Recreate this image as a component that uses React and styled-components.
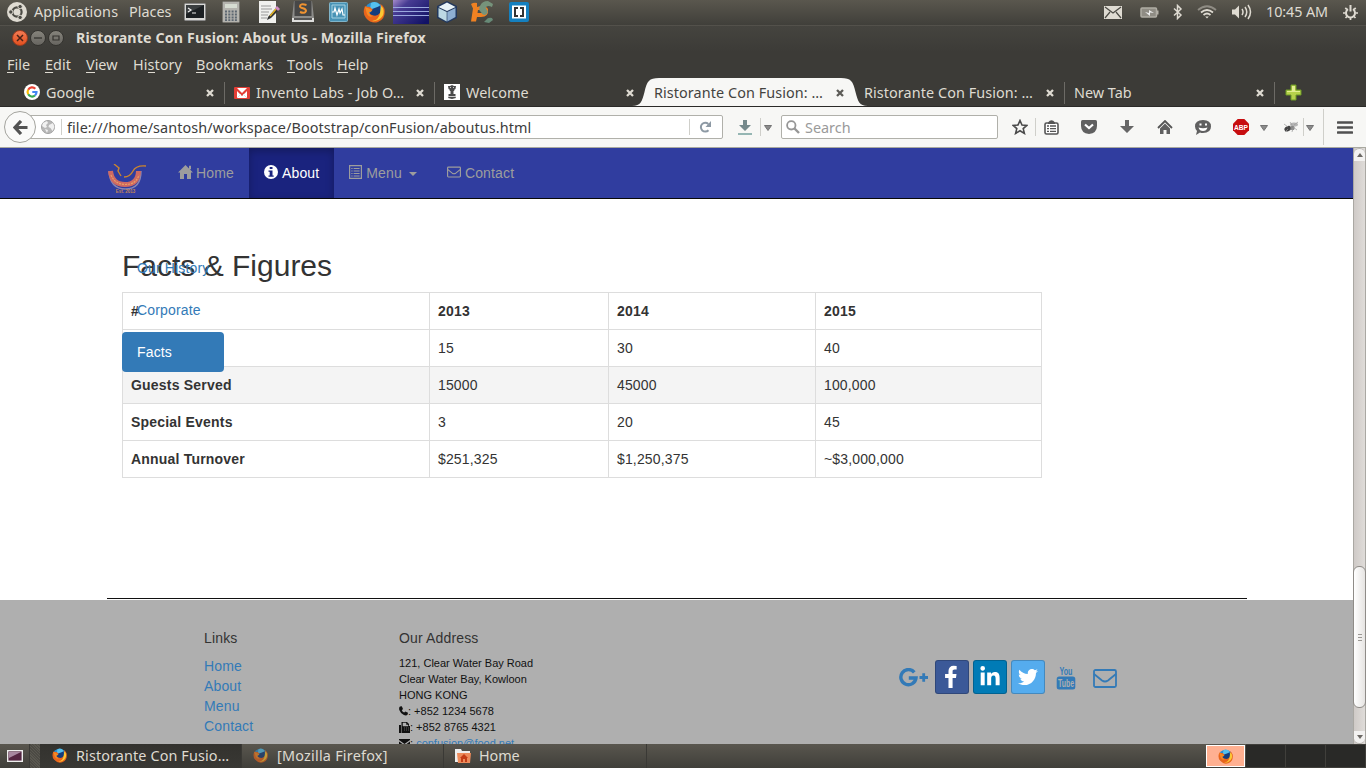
import React from 'react';
import styled, { createGlobalStyle, css } from 'styled-components';
import { FaLinkedinIn, FaTwitter } from 'react-icons/fa';

const ui = '"Noto Sans", "Open Sans", sans-serif';
const web = '"Liberation Sans", Arial, sans-serif';

const GlobalStyle = createGlobalStyle`
  * { box-sizing: border-box; }
  body { margin: 0; overflow: hidden; }
  svg { display: block; flex: none; }
`;

const Screen = styled.div`
  width: 1366px;
  height: 768px;
  display: flex;
  flex-direction: column;
  background: #3c3b37;
  font-family: ${ui};
  overflow: hidden;
`;
const Cell = styled.div`
  flex: none;
  width: ${p => p.$w}px;
  margin-left: ${p => p.$ml || 0}px;
  padding-top: ${p => p.$pt || 0}px;
  display: flex;
  align-items: center;
  white-space: pre;
`;
const Label = styled.span`
  flex: none;
  width: ${p => (p.$w ? p.$w + 'px' : 'auto')};
  margin-left: ${p => p.$ml || 0}px;
  letter-spacing: ${p => p.$ls ?? 0.08}px;
  font-size: ${p => p.$size || 14.4}px;
  white-space: pre;
`;
const Spacer = styled.div`flex: 1;`;
const Panel = styled.header`
  height: 25px;
  flex: none;
  display: flex;
  align-items: center;
  color: #dfdbd2;
  background: linear-gradient(#5a574e, #403f3a);
  line-height: 24px;
  padding-bottom: 1px;
`;
const TitleBar = styled.div`
  height: 27px;
  flex: none;
  display: flex;
  align-items: center;
  padding-bottom: 3px;
  border-top: 1px solid #53514b;
  background: linear-gradient(#45443f, #3c3b37);
  color: #dfdbd2;
  font-weight: 700;
`;
const WindowButton = styled.i`
  width: 16px;
  height: 16px;
  margin-right: 2px;
  border-radius: 50%;
  border: 1px solid ${p => (p.$close ? '#9f3d20' : '#34332f')};
  background: ${p => (p.$close ? 'linear-gradient(#f37b54,#e2501f)' : 'linear-gradient(#85837b,#676560)')};
  display: grid;
  place-items: center;
`;
const MenuBar = styled.nav`
  height: 26px;
  flex: none;
  display: flex;
  align-items: center;
  padding-bottom: 2px;
  color: #dfdbd2;
  u { text-decoration: none; box-shadow: 0 1px 0 #dfdbd2; display: inline-block; height: 15px; line-height: 15px; }
`;
const TabStrip = styled.div`
  height: 29px;
  flex: none;
  display: flex;
  align-items: center;
  padding: 1px 0 1px 15px;
  color: #dfdbd2;
  border-bottom: 1px solid #2b2a28;
`;
const TabBox = styled.div`
  position: relative;
  flex: none;
  width: 210px;
  height: 28px;
  padding-left: 9px;
  display: flex;
  align-items: center;
  color: ${p => (p.$active ? '#44433f' : '#dfdbd2')};
  ${p => p.$line && css`
    background: linear-gradient(#6d6b66, #6d6b66) right 0 top 4px / 1px 22px no-repeat;
  `}
`;
const TabShape = styled.svg`
  position: absolute;
  left: -13px;
  top: 0;
  z-index: 0;
`;
const TabBody = styled.div`
  position: relative;
  flex: 1;
  display: flex;
  align-items: center;
  gap: 6px;
`;
const Toolbar = styled.div`
  height: 41px;
  flex: none;
  display: flex;
  align-items: center;
  background: #f7f7f5;
  border-bottom: 1px solid #a9a9a0;
  color: #3c3c3c;
`;
const BackButton = styled.div`
  position: relative;
  flex: none;
  z-index: 1;
  width: 32px;
  height: 32px;
  margin-left: 4px;
  border: 1px solid #a4a49e;
  border-radius: 50%;
  background: #fafaf9;
  display: grid;
  place-items: center;
`;
const Field = styled.div`
  flex: none;
  width: ${p => p.$w}px;
  height: 24px;
  margin-left: ${p => p.$ml}px;
  border: 1px solid #b0b0aa;
  border-radius: 2px;
  background: #fff;
  display: flex;
  align-items: center;
  color: ${p => p.$color || '#3c3c3c'};
`;
const Rule = styled.i`
  flex: none;
  width: 1px;
  height: ${p => p.$h || 18}px;
  margin-left: ${p => p.$ml || 0}px;
  background: #cfcfca;
`;
const Viewport = styled.div`
  height: 596px;
  flex: none;
  display: flex;
  overflow: hidden;
`;
const Page = styled.div`
  width: 1353px;
  height: 596px;
  overflow: hidden;
  background: #fff;
  font: 14px/20px ${web};
  letter-spacing: 0.15px;
  color: #333;
`;
const NavBar = styled.div`
  height: 51px;
  background: #303d9f;
  border-bottom: 1px solid #080808;
`;
const Container = styled.div`
  width: 1140px;
  margin: 0 106px 0 107px;
`;
const NavRow = styled(Container)`
  display: flex;
`;
const Brand = styled.div`width: 56px; padding-top: 16px;`;
const NavLink = styled.a`
  height: 50px;
  padding: 15px;
  display: flex;
  gap: ${p => p.$gap || 3}px;
  color: ${p => (p.$active ? '#fff' : '#9d9d9d')};
  ${p => p.$active && css`
    background: #1a237e;
    box-shadow: inset 0 3px 9px rgba(0,0,0,.25);
  `}
  svg { margin-top: 2px; }
`;
const Caret = styled.i`
  margin: 9px 0 0 3px;
  width: 0;
  height: 0;
  border: 4px solid transparent;
  border-top-color: currentColor;
  border-bottom: 0;
`;
const Main = styled(Container)`
  position: relative;
  height: 400px;
  padding: 50px 15px 0;
  border-bottom: 1px solid #111;
`;
const Heading = styled.h2`
  margin: 0 0 10px;
  font-size: 30px;
  line-height: 33px;
  font-weight: 400;
  letter-spacing: 0;
`;
const Table = styled.table`
  width: 919px;
  table-layout: fixed;
  border-collapse: collapse;
  th, td {
    height: 37px;
    padding: 8px;
    line-height: 20px;
    border: 1px solid #ddd;
    text-align: left;
  }
  th { letter-spacing: 0.2px; }
`;
const Row = styled.tr`background: ${p => (p.$shade ? '#f4f4f4' : '#fff')};`;
const Pills = styled.div`
  position: absolute;
  left: 15px;
  top: 49px;
  width: 102px;
  display: flex;
  flex-direction: column;
  gap: 2px;
`;
const Pill = styled.a`
  padding: 10px 15px;
  border-radius: 4px;
  white-space: nowrap;
  color: ${p => (p.$active ? '#fff' : '#337ab7')};
  background: ${p => (p.$active ? '#337ab7' : 'transparent')};
`;
const Footer = styled.footer`
  margin-top: 1px;
  height: 145px;
  background: #afafaf;
  display: flex;
  padding: 28px 0 0 204px;
`;
const FootColumn = styled.div`
  width: ${p => p.$w}px;
  display: flex;
  flex-direction: column;
`;
const FootTitle = styled.h5`
  margin: 0 0 8px;
  font-size: 14px;
  font-weight: 400;
  line-height: 20px;
`;
const FootLink = styled.a`color: #337ab7;`;
const AddressLine = styled.div`
  display: flex;
  align-items: center;
  font-size: 11px;
  line-height: 16px;
  height: 16px;
  color: #111;
  white-space: pre;
`;
const Address = styled.div`margin-top: -1px; letter-spacing: 0;`;
const Social = styled.div`
  height: 34px;
  margin-top: 32px;
  display: flex;
  align-items: center;
  color: #337ab7;
`;
const SocialButton = styled.a`
  width: 34px;
  height: 34px;
  margin-right: 4px;
  border-radius: 3px;
  border: 1px solid rgba(0,0,0,.2);
  color: #fff;
  background: ${p => p.$bg};
  display: grid;
  place-items: center;
`;
const ScrollTrack = styled.div`
  width: 13px;
  border: 1px solid #aaa8a3;
  border-width: 0 1px;
  background: linear-gradient(90deg, #cfcac7, #dfdcd9);
  display: flex;
  flex-direction: column;
  justify-content: space-between;
`;
const ScrollEnd = styled.div`
  height: 13px;
  background: #f3f2f1;
  border: 1px solid #b8b5b1;
  border-width: ${p => (p.$down ? '0 0 1px' : '1px 0 0')};
  border-radius: ${p => (p.$down ? '0 0 6px 6px' : '6px 6px 0 0')};
  display: grid;
  place-items: center;
`;
const Thumb = styled.div`
  height: 142px;
  margin: 405px -1px 0;
  border: 1px solid #8f8c88;
  border-radius: 6px;
  background: linear-gradient(90deg, #fff, #e6e4e2);
  display: flex;
  flex-direction: column;
  align-items: center;
  justify-content: center;
  gap: 2px;
  i { width: 4px; height: 1px; background: #9b9894; }
`;
const TaskBar = styled.footer`
  height: 24px;
  flex: none;
  display: flex;
  align-items: center;
  background: linear-gradient(#59564e, #403f3a);
  color: #dfdbd2;
`;
const Task = styled.div`
  width: ${p => p.$w}px;
  height: 24px;
  padding: 0 0 1px ${p => p.$pl}px;
  display: flex;
  align-items: center;
  gap: ${p => p.$gap || 9}px;
  border-right: 1px solid #3a3935;
  background: ${p => (p.$active ? 'linear-gradient(#33322e,#393834)' : 'none')};
  line-height: 20px;
  svg { opacity: ${p => (p.$dim ? 0.65 : 1)}; }
`;
const Grip = styled.div`
  width: 11px;
  height: 24px;
  margin-left: 6px;
  background: repeating-linear-gradient(45deg, #4c4a44 0 1px, #5a5850 1px 2px);
  border-left: 1px solid #3b3a36;
`;
const Workspace = styled.div`
  width: 40px;
  height: 24px;
  border: 1px solid #403f3b;
  border-width: 1px 1px 1px 0;
  background: #292927;
  display: grid;
  place-items: center;
  ${p => p.$current && css`
    background: #ffb091;
    border: 1px solid #fff;
    height: 22px;
    margin-right: 1px;
    width: 39px;
  `}
`;

const Firefox = ({ s = 22 }) => (
  <svg width={s} height={s} viewBox="0 0 22 22">
    <circle cx="11" cy="10.500" r="9.500" fill="#2c8fd0" />
    <path d="M8 2q5-3 9 2l-5 5-5-1z" fill="#55c1ee" />
    <path d="M9 8l8-3 1 7-6 5-6-3z" fill="#153d7c" />
    <path d="M2 5Q-1 12 3 17q5 6 12 4 8-3 6.500-13Q20 4 17 3q3 5 0 9-3 4-8 2-3-1-3-4l4-1-3-3q-3 0-5-1z" fill="#e9651b" />
    <path d="M20 7q2 6-2 10-4 4-9 3 7-1 8-8l1-7z" fill="#fbc834" />
    <path d="M2 6l3 1 4 2q0 2-3 2 0 3 4 4-4 2-6-2z" fill="#f58a24" />
  </svg>
);
const Globe = () => (
  <svg width="14" height="14" viewBox="0 0 14 14">
    <circle cx="7" cy="7" r="6.500" fill="#b8b8b8" stroke="#a1a1a1" />
    <path d="M2 3l4-2 1 2-2 2 1 2-2 1-3-2zM8 5l4-2 1.500 4-2 4-2-3-2-1zM4 9l3 1-1 3z" fill="#f1f1f1" />
  </svg>
);
const CloseMark = ({ c = '#dfdbd2' }) => (
  <svg width="8" height="8" viewBox="0 0 8 8"><path d="M1 1l6 6M7 1L1 7" stroke={c} strokeWidth="2.300" /></svg>
);
const Triangle = () => (
  <svg width="8" height="6" viewBox="0 0 8 6"><path d="M.5.5h7L4 5.500z" fill="#8b8b8b" stroke="#737373" /></svg>
);
const Envelope = ({ w, h, sw = 1 }) => (
  <svg width={w} height={h} viewBox="0 0 24 19" fill="none" stroke="currentColor" strokeWidth={sw}>
    <rect x="1" y="1" width="22" height="17" rx="1.500" />
    <path d="M1 5q5 4 8 6.500 3 2 6 0Q18 9 23 5" />
  </svg>
);
const GoogleFavicon = () => (
  <svg width="16" height="16" viewBox="0 0 16 16" fill="none" strokeWidth="2.200">
    <circle cx="8" cy="8" r="8" fill="#fff" />
    <path d="M11.300 4.700A4.500 4.500 0 0 0 4.200 5.700" stroke="#ea4335" />
    <path d="M4.200 5.700a4.500 4.500 0 0 0 0 4.600" stroke="#fbbc05" />
    <path d="M4.200 10.300a4.500 4.500 0 0 0 6.800 1.200" stroke="#34a853" />
    <path d="M11 11.500Q12.500 10 12.500 8H8.300" stroke="#4285f4" />
  </svg>
);
const GmailFavicon = () => (
  <svg width="16" height="14" viewBox="0 0 16 14">
    <rect y="2" width="16" height="12" rx="1" fill="#e33d35" />
    <path d="M3 3h10L8 8zM3 6l5 5 5-5v7H3z" fill="#fff" />
    <path d="M3 13l4-4M13 13L9 9" stroke="#ddd" />
  </svg>
);
const EmblemFavicon = () => (
  <svg width="16" height="16" viewBox="0 0 16 16">
    <path fill="#fff" d="M0 0h16v16H0z" />
    <path d="M4 2l2 0 2-1 2 1h2l-.5 3-1.500 1 .5 1H9.500v3H11l1 1-1 1 1 2-4 1-4-1 1-2-1-1 1-1h1.500V7H5.500L6 6 4.500 5z" fill="#4a4a4a" />
    <path d="M6 3.500h1m2 0h1M5 12.500h6" stroke="#ccc" />
  </svg>
);

const launchers = [
  { x: 13, w: 22, icon: (
    <svg width="22" height="18" viewBox="0 0 22 18"><rect x=".5" y=".5" width="21" height="17" rx="1" fill="#d8d8d5" stroke="#888" /><path fill="#1c2023" d="M2 2h18v13H2z" /><path d="M2 2h18L2 11z" fill="#3a3e40" /><path d="M4 5l3 2-3 2M8 10h4" stroke="#eee" fill="none" strokeWidth="1.200" /></svg>) },
  { x: 16, w: 18, icon: (
    <svg width="18" height="22" viewBox="0 0 18 22"><rect x=".5" y=".5" width="17" height="21" rx="1" fill="#b4b3ae" stroke="#77756f" /><path fill="#d6dcd2" d="M3 3h12v4H3z" /><path d="M3 10.500h12M3 13.500h12M3 16.500h12M3 19.200h12" stroke="#5c6670" strokeWidth="1.800" strokeDasharray="2 1.300" /></svg>) },
  { x: 18, w: 22, icon: (
    <svg width="22" height="22" viewBox="0 0 22 22"><path d="M1 0h17v22H1z" fill="#f0f0ee" /><path d="M3 5h10M3 8h11M3 11h8M3 14h7M3 17h6" stroke="#999" /><path d="M10 16l8-9 3 2-8 8-4 2z" fill="#333" /><path d="M12 15l6-7" stroke="#e2b323" strokeWidth="1.500" /><path d="M17 7l2-2 3 3-2 2z" fill="#d18ac3" /></svg>) },
  { x: 12, w: 22, icon: (
    <svg width="22" height="22" viewBox="0 0 22 22"><path d="M2 0h18l2 17v4H0v-4z" fill="#8c8c8a" /><path d="M0 17h22v4H0z" fill="#dededc" /><path d="M2.500 0h17v15h-17z" fill="#474747" /><path d="M2 17h18v2H2z" fill="#555" /><path d="M14.500 4Q8 2 8 5.500q0 1 3 1.800t3 2.700q-1 3-6 1" fill="none" stroke="#f09331" strokeWidth="2" /></svg>) },
  { x: 15, w: 19, icon: (
    <svg width="19" height="20" viewBox="0 0 19 20"><rect x=".5" y=".5" width="18" height="19" rx="1" fill="#4893b6" stroke="#80b4c9" /><path d="M3 3h13v13H3z" fill="none" stroke="#a5d2e2" /><path d="M3 10h2l1-4 2 7 2-6 1 4 2-4 1 6h2" fill="none" stroke="#fff" strokeWidth="1.200" /></svg>) },
  { x: 15, w: 22, icon: <Firefox /> },
  { x: 8, w: 36, icon: (
    <svg width="36" height="24" viewBox="0 0 36 24"><defs><linearGradient id="ecl" x2="1" y2=".8"><stop stopColor="#a58bc9" /><stop offset=".3" stopColor="#473c93" /><stop offset="1" stopColor="#121266" /></linearGradient></defs><path fill="url(#ecl)" d="M0 0h36v24H0z" /><path d="M0 7.500h36M0 11.500h36M0 15.500h36" stroke="#9aa8de" strokeWidth="1.200" /></svg>) },
  { x: 7, w: 22, icon: (
    <svg width="22" height="24" viewBox="0 0 22 24"><path d="M11 1l10 5v12l-10 5-10-5V6z" fill="#23385c" /><path d="M11 2.500L19.500 7 11 11 2.500 7z" fill="#e8f3f7" /><path d="M2.500 8L10.700 12v9.500l-8.200-4.500z" fill="#bcd8e4" /><path d="M19.500 8L11.300 12v9.500l8.200-4.500z" fill="#8eafd2" /></svg>) },
  { x: 13, w: 23, icon: (
    <svg width="23" height="24" viewBox="0 0 23 24"><path d="M0 4q3-2 6-1v4q8-3 11 2 1 8-7 8H6l-1 4.500H0l2-13z" fill="#f08122" /><path d="M7 10h4q2 0 1 3H6.500z" fill="#4b4a45" /><path d="M9 6q2-5 8-5l5 3-1 3q-4-2-6 0-1 1 1 3 2 3-2 5-3 0-4-3-3-2-1-6z" fill="#76937b" /><path d="M15 20q2-3 6-2l1 2-4 3-5-1z" fill="#678a77" /></svg>) },
  { x: 15, w: 20, icon: (
    <svg width="20" height="20" viewBox="0 0 20 20"><rect width="20" height="20" rx="2" fill="#1580bf" /><rect x="3" y="3.500" width="14" height="13" fill="#fff" /><path d="M9 6H6v8h3M11 6h3v8h-3" fill="none" stroke="#333" strokeWidth="2" /></svg>) },
];

const tabs = [
  { text: 'Google', icon: <GoogleFavicon />, line: true, ls: 0 },
  { text: 'Invento Labs - Job O…', icon: <GmailFavicon />, line: true },
  { text: 'Welcome', icon: <EmblemFavicon /> },
  { text: 'Ristorante Con Fusion: …', active: true },
  { text: 'Ristorante Con Fusion: …', line: true },
  { text: 'New Tab', line: true, ls: 0 },
];

const rows = [
  ['', '15', '30', '40'],
  ['Guests Served', '15000', '45000', '100,000'],
  ['Special Events', '3', '20', '45'],
  ['Annual Turnover', '$251,325', '$1,250,375', '~$3,000,000'],
];

const SystemPanel = () => (
  <Panel>
    <Cell $w={20} $ml={7}>
      <svg width="20" height="20" viewBox="0 0 20 20"><circle cx="10" cy="10" r="10" fill="#dfdbd2" /><circle cx="10" cy="10" r="4.600" fill="none" stroke="#4b4a44" strokeWidth="2.200" /><g fill="#4b4a44" stroke="#dfdbd2"><circle cx="3.800" cy="10" r="2.200" /><circle cx="13.100" cy="4.600" r="2.200" /><circle cx="13.100" cy="15.400" r="2.200" /></g></svg>
    </Cell>
    <Label $w={84} $ml={7} $ls={0.12}>Applications</Label>
    <Label $w={42} $ml={11} $ls={0}>Places</Label>
    {launchers.map((l, i) => <Cell key={i} $w={l.w} $ml={l.x}>{l.icon}</Cell>)}
    <Spacer />
    <Cell $w={18}><svg width="18" height="13" viewBox="0 0 18 13"><path fill="#dfdbd2" d="M0 0h18v13H0z" /><path d="M1 1l8 6 8-6M1 12l5-6M17 12l-5-6" stroke="#4b4a44" fill="none" strokeWidth="1.200" /></svg></Cell>
    <Cell $w={19} $ml={18}><svg width="19" height="11" viewBox="0 0 19 11"><rect x="1" y="1" width="15.500" height="9" rx="1" fill="#8f8c84" stroke="#b0ada4" strokeWidth="1.500" /><path d="M17 3.500h1.500v4H17" fill="#b5b1a8" /><path d="M5 5l4 1V3l5 3-4-.5V9z" fill="#eee" /></svg></Cell>
    <Cell $w={10} $ml={14}><svg width="10" height="16" viewBox="0 0 10 16"><path d="M1 4.500l7 6.500-3.500 3.500v-13L8 5l-7 6.500" fill="none" stroke="#dfdbd2" strokeWidth="1.500" /></svg></Cell>
    <Cell $w={20} $ml={14}><svg width="20" height="14" viewBox="0 0 20 14" fill="none" stroke="#dfdbd2" strokeWidth="1.700"><path d="M1 5q9-7.500 18 0" stroke="#8f8c84" /><path d="M4 7.500q6-5 12 0M6.500 10q3.500-3 7 0" /><path d="M8.200 11.500h3.600L10 13.500z" fill="#dfdbd2" stroke="none" /></svg></Cell>
    <Cell $w={20} $ml={15}><svg width="20" height="16" viewBox="0 0 20 16" fill="none" stroke="#dfdbd2" strokeWidth="1.500"><path d="M0 5.500h3l4-4v13l-4-4H0z" fill="#dfdbd2" stroke="none" /><path d="M10 5q2 3 0 6M13 3q3.500 5 0 10M16 1q5 7 0 14" /></svg></Cell>
    <Label $w={62} $ml={14} $ls={-0.1}>10:45 AM</Label>
    <Cell $w={15} $ml={15}><svg width="15" height="15" viewBox="0 0 15 15" fill="none" stroke="#dfdbd2"><path d="M5 4.200a4.500 4.500 0 1 0 5 0" strokeWidth="2" /><path d="M7.500 0v6.500" strokeWidth="2" /><path d="M2.300 2.800l1.500 1.500M12.700 2.800l-1.500 1.500M0 8h2.500M12.500 8H15M2.500 13l2-2M12.500 13l-2-2M7.500 12.500V15" strokeWidth="1.700" /></svg></Cell>
    <Cell $w={8} />
  </Panel>
);

const BrowserToolbar = () => (
  <Toolbar>
    <BackButton><svg width="15" height="15" viewBox="0 0 15 15"><path d="M8 1L2 7.500 8 14M3 7.500h11.500" stroke="#535353" fill="none" strokeWidth="3.200" /></svg></BackButton>
    <Field $w={694} $ml={-7}>
      <Cell $w={14} $ml={11}><Globe /></Cell>
      <Rule $ml={6} $h={16} />
      <Label $w={622} $ml={5} $ls={0.09}>file:///home/santosh/workspace/Bootstrap/conFusion/aboutus.html</Label>
      <Rule $h={16} />
      <Cell $w={12} $ml={9}><svg width="13" height="12" viewBox="0 0 13 12"><path d="M9.500 9.200A4.400 4.400 0 1 1 9.300 3" fill="none" stroke="#8d99a4" strokeWidth="2" /><path d="M12 0v6H6.500z" fill="#8d99a4" /></svg></Cell>
    </Field>
    <Cell $w={14} $ml={15}><svg width="14" height="15" viewBox="0 0 14 15"><path d="M5 0h4v5h4L7 11 1 5h4z" fill="#75898b" /><path d="M0 14h14" stroke="#75a09d" strokeWidth="1.500" /></svg></Cell>
    <Rule $ml={8} />
    <Cell $w={8} $ml={3} $pt={2}><Triangle /></Cell>
    <Field $w={217} $ml={9} $color="#9a9a9a">
      <Cell $w={14} $ml={4}><svg width="14" height="14" viewBox="0 0 14 14" fill="none" stroke="#969696" strokeWidth="1.800"><circle cx="5.300" cy="5.300" r="4.200" /><path d="M8.500 8.500l4.500 4.500" strokeWidth="2.400" /></svg></Cell>
      <Label $ml={5} $ls={0}>Search</Label>
    </Field>
    <Cell $w={16} $ml={14}><svg width="16" height="16" viewBox="0 0 16 16"><path d="M8 1.500l2 4.500 4.800.4-3.600 3.200 1.200 4.800L8 11.800l-4.400 2.600 1.200-4.800L1.200 6.400 6 6z" fill="none" stroke="#4a4a4a" strokeWidth="1.600" /></svg></Cell>
    <Rule $ml={7} />
    <Cell $w={15} $ml={8}><svg width="15" height="15" viewBox="0 0 15 15"><rect x="1" y="3" width="13" height="11" rx="1.500" fill="#fff" stroke="#555" strokeWidth="1.600" /><path d="M4 2.500q3.500-4.500 7 0V4H4z" fill="#555" /><path d="M3 6h2m1 0h6M3 8.700h2m1 0h6M3 11.400h2m1 0h6" stroke="#555" strokeWidth="1.300" /></svg></Cell>
    <Cell $w={16} $ml={22}><svg width="16" height="14" viewBox="0 0 16 14"><path d="M0 1.500Q0 0 1.500 0h13Q16 0 16 1.500V6q0 7-8 8-8-1-8-8z" fill="#606060" /><path d="M4 4.500L8 8l4-3.500" fill="none" stroke="#fff" strokeWidth="2.200" /></svg></Cell>
    <Cell $w={14} $ml={23}><svg width="14" height="14" viewBox="0 0 14 14"><path d="M5 0h4v6h5l-7 7-7-7h5z" fill="#666" /></svg></Cell>
    <Cell $w={16} $ml={23}><svg width="16" height="15" viewBox="0 0 16 15"><path d="M1 8l7-7 7 7" fill="none" stroke="#555" strokeWidth="1.800" /><path d="M3 8.500l5-5 5 5V14H9.500v-4h-3v4H3z" fill="#606060" /></svg></Cell>
    <Cell $w={16} $ml={22}><svg width="16" height="15" viewBox="0 0 16 15"><path d="M8 0q8 0 8 6.500T8 13q-2 0-3-.5L1 15l1-4Q0 9 0 6.500 0 0 8 0z" fill="#606060" /><path d="M3.500 7.500q4.500 1.500 9 0-1 3.500-4.500 3.500T3.500 7.500M4.500 3.500h2v2h-2zM10 3.500h2v2h-2z" fill="#fff" /></svg></Cell>
    <Cell $w={16} $ml={22}><svg width="16" height="16" viewBox="0 0 16 16"><path d="M4.700 0h6.600L16 4.700v6.600L11.300 16H4.700L0 11.300V4.700z" fill="#c70d0f" /><text x="8" y="11" textAnchor="middle" fontFamily="Liberation Sans" fontWeight="700" fontSize="8" textLength="14" lengthAdjust="spacingAndGlyphs" fill="#fff">ABP</text></svg></Cell>
    <Cell $w={8} $ml={11} $pt={2}><Triangle /></Cell>
    <Cell $w={16} $ml={15}><svg width="16" height="14" viewBox="0 0 16 14"><ellipse cx="4.500" cy="8.500" rx="3.500" ry="2.500" fill="#444" transform="rotate(-25 5 8)" /><ellipse cx="11" cy="4.500" rx="4" ry="2" fill="#b5b5b5" /><circle cx="9.500" cy="8" r="2.200" fill="#888" /><path d="M1 4l4 3M2 12l3-3M9 12l1-4M14 10l-4-3M7 2l2 3M15 2l-4 3" stroke="#999" strokeWidth=".7" /></svg></Cell>
    <Rule $ml={4} />
    <Cell $w={8} $ml={2} $pt={2}><Triangle /></Cell>
    <Rule $ml={9} $h={36} />
    <Cell $w={16} $ml={13}><svg width="16" height="13" viewBox="0 0 16 13"><path d="M1 1.500h14M1 6.500h14M1 11.500h14" stroke="#505050" strokeWidth="2.600" strokeLinecap="round" /></svg></Cell>
  </Toolbar>
);

const SiteNav = () => (
  <NavBar>
    <NavRow>
      <Brand>
        <svg width="42" height="30" viewBox="0 0 42 30" fill="none">
          <path d="M2 7q1 18 16.500 18T34 7" stroke="#8585b5" strokeWidth="1.500" />
          <path d="M3.500 7Q5 20.500 18 20.500T31.500 7" stroke="#cf6a62" strokeWidth="5" />
          <path d="M4 11q4 9.500 14.500 9.500T32 11" stroke="#e8a064" strokeWidth="1.200" strokeDasharray="2 1" />
          <path d="M7 0l5 4-1 3 3 5M17 13q6 0 9-6 3-6 13-5" stroke="#c98430" strokeWidth="1.400" />
          <text x="18.500" y="29" fontSize="4.500" fontWeight="700" fontFamily="Liberation Sans" textAnchor="middle" fill="#c58756" letterSpacing="0">Est. 2013</text>
        </svg>
      </Brand>
      <NavLink>
        <svg width="15" height="14" viewBox="0 0 15 14"><path d="M7.500 0L15 7.500h-2V14H9V9H6v5H2V7.500H0zM11 .8h2v3.500h-2z" fill="currentColor" /></svg>Home
      </NavLink>
      <NavLink $active $gap={4}>
        <svg width="14" height="14" viewBox="0 0 14 14"><circle cx="7" cy="7" r="7" fill="#fff" /><path d="M5.700 2h2.800v2H5.700zM4.500 5.500h4v5h1.200v1.200H4.500v-1.200h1.200V6.700H4.500z" fill="#1a237e" /></svg>About
      </NavLink>
      <NavLink $gap={4}>
        <svg width="13" height="14" viewBox="0 0 13 14" fill="none" stroke="currentColor"><path d="M.6.6h11.800v12.800H.6z" strokeWidth="1.200" /><path d="M2.300 3.500h1.300m1 0h6M2.300 6h1.300m1 0h6M2.300 8.500h1.300m1 0h6M2.300 11h1.300m1 0h6" strokeWidth="1.200" /></svg>Menu<Caret />
      </NavLink>
      <NavLink $gap={4}><Envelope w={14} h={14} sw={2} />Contact</NavLink>
    </NavRow>
  </NavBar>
);

const SiteFooter = () => (
  <Footer>
    <FootColumn $w={195}>
      <FootTitle>Links</FootTitle>
      {['Home', 'About', 'Menu', 'Contact'].map(t => <FootLink key={t}>{t}</FootLink>)}
    </FootColumn>
    <FootColumn $w={500}>
      <FootTitle>Our Address</FootTitle>
      <Address>
        <AddressLine>121, Clear Water Bay Road</AddressLine>
        <AddressLine>Clear Water Bay, Kowloon</AddressLine>
        <AddressLine>HONG KONG</AddressLine>
        <AddressLine><svg width="9" height="10" viewBox="0 0 9 10"><path d="M1 .5L2.800.2 4 3 2.800 4.200Q3.500 6 5.200 6.600L6.300 5.500 9 6.800 8.500 8.800Q7 10 4.500 8.800 1.500 7.200.3 4 -.3 1.500 1 .5z" fill="#111" /></svg>: +852 1234 5678</AddressLine>
        <AddressLine><svg width="11" height="11" viewBox="0 0 11 11"><path d="M0 3h2v8H0zM2.500 0H8l2 2v2h1v7H2.500z" fill="#111" /><path d="M4 1h3v2h2v1H4zM5 6h1m1 0h1m1 0h1M5 8h1m1 0h1m1 0h1" stroke="#afafaf" fill="#afafaf" strokeWidth=".5" /></svg>: +852 8765 4321</AddressLine>
        <AddressLine><svg width="11" height="9" viewBox="0 0 11 9"><path d="M0 0h11v1L5.500 5 0 1zM0 2.500l5.500 4 5.500-4V9H0z" fill="#111" /></svg>: <FootLink>confusion@food.net</FootLink></AddressLine>
      </Address>
    </FootColumn>
    <Social>
      <Cell $w={36} $pt={2}><svg width="30" height="20" viewBox="0 0 30 20" fill="none" stroke="#337ab7"><path d="M15.300 4.300A7.600 7.600 0 1 0 17 10H9.800" strokeWidth="3.400" /><path d="M20.500 9.500h8.500M24.700 5.300v8.500" strokeWidth="2.800" /></svg></Cell>
      <SocialButton $bg="#3b5998"><svg width="24" height="24" viewBox="100 -60 1792 1792"><path d="M1343 12v264h-157q-86 0-116 36t-30 108v189h293l-39 296h-254v759h-306v-759h-255v-296h255v-218q0-186 104-288.500t277-102.500q147 0 228 12z" fill="#fff" /></svg></SocialButton>
      <SocialButton $bg="#007bb6"><FaLinkedinIn size={22} /></SocialButton>
      <SocialButton $bg="#55acee"><FaTwitter size={20} /></SocialButton>
      <Cell $w={20} $ml={7} $pt={1}><svg width="20" height="24" viewBox="0 0 20 24" overflow="visible"><text x="10" y="9" textAnchor="middle" fontFamily="Liberation Sans" fontSize="11.500" fontWeight="700" textLength="13" lengthAdjust="spacingAndGlyphs" fill="#337ab7" letterSpacing="0">You</text><rect x=".7" y="10.500" width="18.600" height="13" rx="2.500" fill="#337ab7" /><text x="10" y="21.200" textAnchor="middle" fontFamily="Liberation Sans" fontSize="11" fontWeight="700" textLength="16" lengthAdjust="spacingAndGlyphs" fill="#afafaf" letterSpacing="0">Tube</text></svg></Cell>
      <Cell $w={24} $ml={17} $pt={2}><Envelope w={24} h={19} sw={1.8} /></Cell>
    </Social>
  </Footer>
);

export default function App() {
  return (
    <Screen>
      <GlobalStyle />
      <SystemPanel />
      <TitleBar>
        <Cell $w={64} $ml={12}>
          <WindowButton $close><svg width="8" height="8" viewBox="0 0 8 8"><path d="M1 1l6 6M7 1L1 7" stroke="#482217" strokeWidth="1.500" /></svg></WindowButton>
          <WindowButton><svg width="8" height="8" viewBox="0 0 8 8"><path d="M0 4h8" stroke="#34332f" strokeWidth="1.300" /></svg></WindowButton>
          <WindowButton><svg width="8" height="8" viewBox="0 0 8 8"><path d="M1 2h6v4H1z" stroke="#34332f" strokeWidth="1.200" fill="none" /></svg></WindowButton>
        </Cell>
        <Label $size={14.2} $ls={0.16}>Ristorante Con Fusion: About Us - Mozilla Firefox</Label>
      </TitleBar>
      <MenuBar>
        <Label $w={38} $ml={7} $ls={0}><u>F</u>ile</Label>
        <Label $w={41}><u>E</u>dit</Label>
        <Label $w={47} $ls={0}><u>V</u>iew</Label>
        <Label $w={63}>Hi<u>s</u>tory</Label>
        <Label $w={91}><u>B</u>ookmarks</Label>
        <Label $w={50} $ls={0}><u>T</u>ools</Label>
        <Label $ls={0}><u>H</u>elp</Label>
      </MenuBar>
      <TabStrip>
        {tabs.map((t, i) => (
          <TabBox key={i} $active={t.active} $line={t.line}>
            {t.active && <TabShape width="236" height="28" viewBox="0 0 236 28"><path d="M0 28C9 28 10 23 12.500 14 15 3 17 0 27 0H209C219 0 221 3 223.500 14 226 23 227 28 236 28z" fill="#f7f7f5" /></TabShape>}
            <TabBody>{t.icon}<Label $ls={t.ls}>{t.text}</Label></TabBody>
            <Cell $w={19} $pt={2}><TabBody><CloseMark c={t.active ? '#5c5b57' : undefined} /></TabBody></Cell>
          </TabBox>
        ))}
        <Cell $w={18} $ml={10} $pt={1}><svg width="17" height="17" viewBox="0 0 17 17"><path d="M6 1h5v5h5v5h-5v5H6v-5H1V6h5z" fill="#b7d24b" stroke="#6d9a26" /><path d="M7 2h3v5h5v1H2V7h5z" fill="#e3ee91" /></svg></Cell>
      </TabStrip>
      <BrowserToolbar />
      <Viewport>
        <Page>
          <SiteNav />
          <Main>
            <Heading>Facts &amp; Figures</Heading>
            <Table>
              <colgroup><col width="307" /><col width="179" /><col width="207" /><col width="226" /></colgroup>
              <tbody>
                <Row><th>#</th><th>2013</th><th>2014</th><th>2015</th></Row>
                {rows.map((r, i) => (
                  <Row key={i} $shade={i === 1}><th>{r[0]}</th><td>{r[1]}</td><td>{r[2]}</td><td>{r[3]}</td></Row>
                ))}
              </tbody>
            </Table>
            <Pills><Pill>Our History</Pill><Pill>Corporate</Pill><Pill $active>Facts</Pill></Pills>
          </Main>
          <SiteFooter />
        </Page>
        <ScrollTrack>
          <ScrollEnd><svg width="6" height="4" viewBox="0 0 6 4"><path d="M0 4l3-4 3 4z" fill="#6b6864" /></svg></ScrollEnd>
          <Thumb><i /><i /><i /></Thumb>
          <Spacer />
          <ScrollEnd $down><svg width="6" height="4" viewBox="0 0 6 4"><path d="M0 0l3 4 3-4z" fill="#6b6864" /></svg></ScrollEnd>
        </ScrollTrack>
      </Viewport>
      <TaskBar>
        <Cell $w={16} $ml={7}><svg width="16" height="12" viewBox="0 0 16 12"><rect x=".7" y=".7" width="14.600" height="10.600" fill="#542542" stroke="#eee" strokeWidth="1.400" /><path d="M2 2h12L2 8z" fill="#a787a0" /></svg></Cell>
        <Grip />
        <Task $w={202} $pl={12} $active><Firefox s={15} /><Label $ls={0.12}>Ristorante Con Fusio…</Label></Task>
        <Task $w={202} $pl={11} $dim><Firefox s={15} /><Label $ls={0.23}>[Mozilla Firefox]</Label></Task>
        <Task $w={203} $pl={11} $gap={8}>
          <svg width="16" height="15" viewBox="0 0 16 15"><path d="M0 1h6l1 2h8v11H0z" fill="#eee" /><path d="M2 5h14l-1 10H3z" fill="#ed8b5b" /><path d="M5 10l4-4 4 4h-1v4h-2v-3H8v3H6v-4z" fill="#c33c16" /></svg>
          <Label $ls={-0.1}>Home</Label>
        </Task>
        <Spacer />
        <Workspace $current><Firefox s={15} /></Workspace>
        <Workspace /><Workspace /><Workspace />
      </TaskBar>
    </Screen>
  );
}
